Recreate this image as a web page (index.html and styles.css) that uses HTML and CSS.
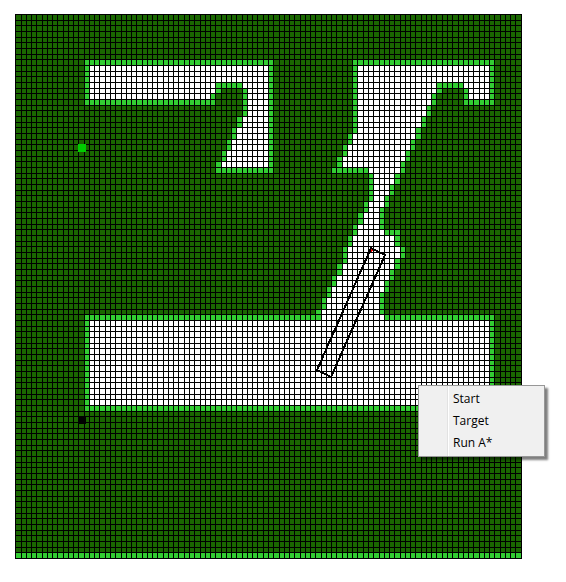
FILE: index.html
```
<!DOCTYPE html>
<html lang="en">
<head>
<meta charset="utf-8">
<title>A* configuration space</title>
<link rel="stylesheet" href="styles.css">
</head>
<body>
<main class="workspace">
  <svg class="grid" width="507" height="545" viewBox="0 0 507 545" role="img" aria-label="Configuration space">
    <rect class="blocked" width="507" height="545"/>
    <path id="free" class="free"/>
    <path id="edge" class="edge"/>
    <path id="lines" class="lines"/>
    <rect class="start" x="63" y="130" width="8" height="8"/>
    <rect class="target" x="63" y="402" width="8" height="8"/>
    <path class="pivot" d="M355 234h3v3h-1v1h-1v-2h-1z"/>
    <path class="robot" d="M356 234L370 241L316 363L302 356Z"/>
  </svg>
  <div class="menu" role="menu">
    <button class="item" type="button" role="menuitem">Start</button>
    <button class="item" type="button" role="menuitem">Target</button>
    <button class="item" type="button" role="menuitem">Run A*</button>
  </div>
</main>
<script src="grid.js"></script>
</body>
</html>
```
FILE: styles.css
```
body {
  margin: 0;
  background: #fff;
  font-family: "Open Sans", "Noto Sans", sans-serif;
}

.workspace {
  position: relative;
  padding: 14px 15px;
}

.grid {
  display: block;
  shape-rendering: crispEdges;
}

.blocked { fill: #1a6600; }
.free { fill: #fff; }
.edge { fill: #32cd32; }
.lines { fill: #000; }
.start { fill: #00cd00; }
.target { fill: #000; }
.pivot { fill: #f00; }

.robot {
  fill: none;
  stroke: #000;
  stroke-width: 2;
}

.menu {
  position: absolute;
  left: 418px;
  top: 385px;
  width: 127px;
  box-sizing: border-box;
  display: flex;
  flex-direction: column;
  padding: 2px;
  border: 1px solid #979797;
  background: linear-gradient(90deg, transparent 28px, #e2e2e2 28px, #e2e2e2 29px, #fff 29px, #fff 30px, transparent 30px) #f0f0f0;
  box-shadow: 3px 3px 2px rgba(0, 0, 0, 0.5);
}

.item {
  height: 22px;
  padding: 0 0 0 32px;
  border: 0;
  background: none;
  color: #000;
  font: inherit;
  font-size: 12px;
  line-height: 22px;
  text-align: left;
}
```
FILE: grid.js
```
const CELLS = 96;
const lineX = (k) => Math.floor(5.265 * k + 0.75);
const lineY = (k) => Math.floor(17 * k / 3 + 0.5);

const edge = [];
const free = [];

// Adds the cells from column c1 to c2 on every row from r1 to r2.
function span(list, r1, r2, c1, c2 = c1) {
  for (let r = r1; r <= r2; r++) {
    list.push([r, c1, c2]);
  }
}

// Left passage
span(edge, 8, 8, 13, 48);
span(edge, 9, 14, 13);
span(edge, 15, 15, 13, 37);
span(edge, 14, 14, 37);
span(edge, 13, 13, 38);
span(edge, 12, 12, 38, 42);
span(edge, 13, 17, 43);
span(edge, 27, 27, 38, 48);
span(edge, 9, 26, 48);
span(free, 9, 11, 14, 47);
span(free, 12, 13, 14, 37);
span(free, 14, 14, 14, 36);
span(free, 12, 12, 43, 47);
span(free, 13, 17, 44, 47);
[[18, 19, 42], [20, 21, 41], [22, 23, 40], [24, 25, 39], [26, 26, 38]].forEach(([a, b, c]) => {
  span(edge, a, b, c);
  span(free, a, b, c + 1, 47);
});

// Right passage
span(edge, 8, 8, 64, 90);
span(edge, 9, 14, 90);
span(edge, 15, 15, 85, 90);
span(edge, 13, 14, 85);
span(edge, 12, 12, 80, 84);
span(edge, 27, 27, 60, 66);
span(edge, 38, 38, 70, 72);
span(free, 9, 11, 65, 89);
span(free, 12, 12, 85, 89);
span(free, 13, 14, 86, 89);
// First row, last row, left edge column, right edge column
[
  [12, 13, 64, 80], [14, 15, 64, 79], [16, 17, 64, 78], [18, 19, 64, 77],
  [20, 20, 64, 76], [21, 21, 63, 76], [22, 22, 63, 75], [23, 23, 62, 75],
  [24, 24, 62, 74], [25, 25, 61, 74], [26, 26, 61, 73], [27, 27, 66, 73],
  [28, 29, 67, 72], [30, 31, 67, 71], [32, 32, 67, 70], [33, 33, 66, 70],
  [34, 34, 66, 69], [35, 36, 65, 69], [37, 37, 64, 69], [38, 38, 64, 70],
  [39, 40, 63, 72], [41, 42, 62, 73], [43, 43, 62, 72], [44, 44, 61, 72],
  [45, 45, 61, 71], [46, 46, 60, 71], [47, 47, 60, 70], [48, 48, 59, 70],
  [49, 49, 59, 69], [50, 51, 58, 69], [52, 52, 57, 69], [53, 53, 57, 70]
].forEach(([a, b, left, right]) => {
  span(edge, a, b, left);
  span(edge, a, b, right);
  span(free, a, b, left + 1, right - 1);
});
span(edge, 9, 11, 64);

// Lower hall and bottom row
span(edge, 53, 53, 13, 57);
span(edge, 53, 53, 70, 90);
span(edge, 54, 68, 13);
span(edge, 54, 68, 90);
span(edge, 69, 69, 13, 90);
span(free, 54, 68, 14, 89);
span(edge, 95, 95, 0, 95);

const cellsPath = (list) => list.map(([r, c1, c2]) =>
  `M${lineX(c1)} ${lineY(r)}H${lineX(c2 + 1)}V${lineY(r + 1)}H${lineX(c1)}Z`).join("");

let lines = "";
for (let k = 0; k <= CELLS; k++) {
  lines += `M${lineX(k)} 0h1v545h-1zM0 ${lineY(k)}h507v1h-507z`;
}

document.getElementById("free").setAttribute("d", cellsPath(free));
document.getElementById("edge").setAttribute("d", cellsPath(edge));
document.getElementById("lines").setAttribute("d", lines);
```
